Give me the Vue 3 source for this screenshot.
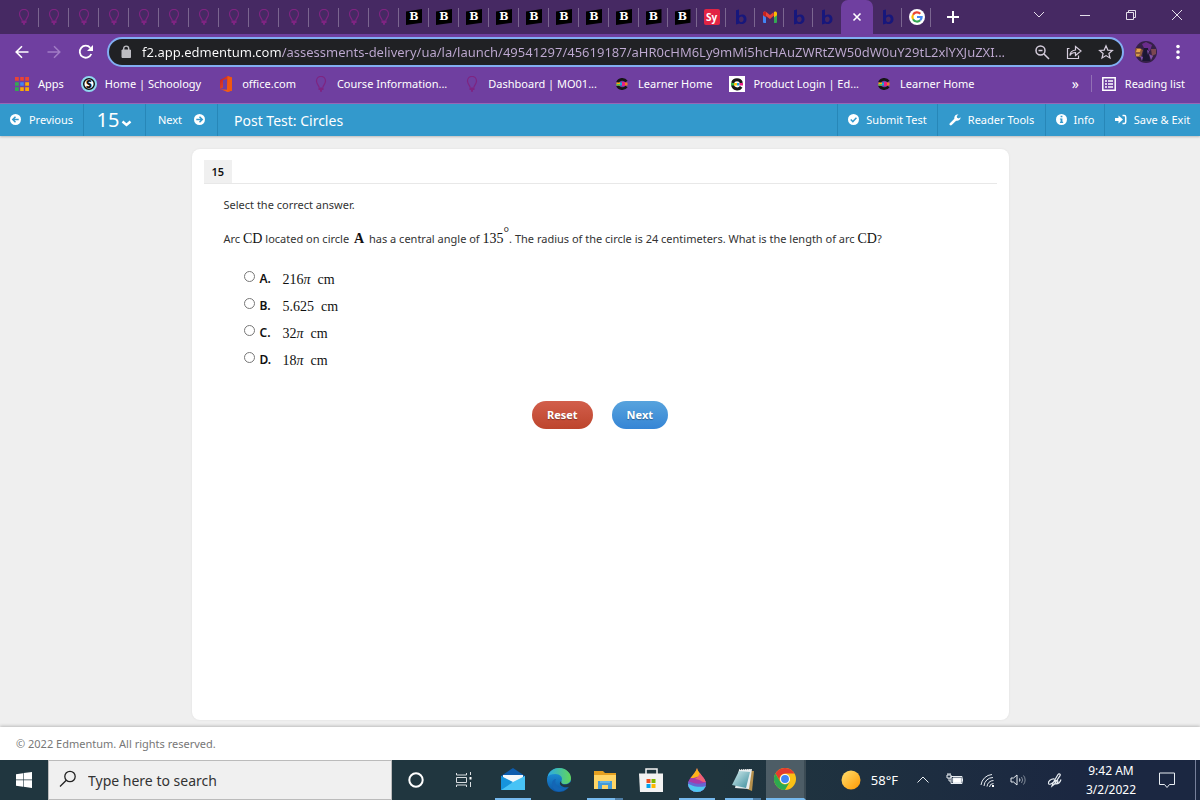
<script setup>
import { ref } from 'vue'

const letters = { brain: 'B', sy: 'Sy', schoology: 'S' }

const tabs = [
  ...Array.from({ length: 13 }, () => ({ icon: 'bulb' })),
  ...Array.from({ length: 8 }, () => ({ icon: 'brain' })),
  { icon: 'brain', narrow: true },
  { icon: 'brain', narrow: true },
  { icon: 'sy', narrow: true },
  { icon: 'bart', narrow: true },
  { icon: 'gmail', narrow: true },
  { icon: 'bart', narrow: true },
  { icon: 'bart', narrow: true, bare: true },
  { icon: 'close', active: true },
  { icon: 'bart', narrow: true },
  { icon: 'google', narrow: true },
]

const bookmarks = [
  { icon: 'apps', text: 'Apps' },
  { icon: 'schoology', text: 'Home | Schoology' },
  { icon: 'office', text: 'office.com' },
  { icon: 'bulb', text: 'Course Information...' },
  { icon: 'bulb', text: 'Dashboard | MO01...' },
  { icon: 'learner', text: 'Learner Home' },
  { icon: 'product', text: 'Product Login | Ed...' },
  { icon: 'learner', text: 'Learner Home' },
]

const url = ref('f2.app.edmentum.com/assessments-delivery/ua/la/launch/49541297/45619187/aHR0cHM6Ly9mMi5hcHAuZWRtZW50dW0uY29tL2xlYXJuZXI...')
const answer = ref(null)
const options = [
  { letter: 'A', value: '216', pi: true },
  { letter: 'B', value: '5.625', pi: false },
  { letter: 'C', value: '32', pi: true },
  { letter: 'D', value: '18', pi: true },
]
const taskApps = [
  { icon: 'mail', open: true },
  { icon: 'edge' },
  { icon: 'folder', open: true, stacked: true },
  { icon: 'store' },
  { icon: 'paint', open: true },
  { icon: 'notepad', open: true, stacked: true },
]
</script>

<template>
  <div class="screen">
    <svg class="sprite" aria-hidden="true">
      <defs>
        <linearGradient id="gOffice" x1="0" y1="0" x2="1" y2="1"><stop offset="0" stop-color="#c2152a" /><stop offset="1" stop-color="#ff7a1a" /></linearGradient>
        <linearGradient id="gEdge" x1="0" y1="0" x2="1" y2="0"><stop offset="0" stop-color="#29a9e8" /><stop offset="1" stop-color="#62d65a" /></linearGradient>
        <linearGradient id="gEdge2" x1="0" y1="0" x2="0" y2="1"><stop offset="0" stop-color="#1f9ce0" /><stop offset="1" stop-color="#0c56a6" /></linearGradient>
        <linearGradient id="gSun" x1="0" y1="0" x2="1" y2="1"><stop offset="0" stop-color="#ffdf70" /><stop offset="1" stop-color="#ff9800" /></linearGradient>
        <linearGradient id="gNote" x1="0" y1="0" x2="1" y2="1"><stop offset="0" stop-color="#d5eef0" /><stop offset="1" stop-color="#3d8d9c" /></linearGradient>
        <clipPath id="cDrop"><path d="M13 1c1 6 9 9 9 16a9 8 0 0 1-18 0C4 11 11 8 13 1z" /></clipPath>
        <clipPath id="cPhoto"><circle cx="11" cy="11" r="11" /></clipPath>
      </defs>
      <symbol id="bulb" viewBox="0 0 16 16"><path d="M6.200 11.500C6 9.500 3.500 8 3.500 4.900a4.500 4.500 0 0 1 9 0C12.500 8 10 9.500 9.800 11.500" fill="none" stroke="#7e2482" stroke-width="1.200" /><path d="M5.500 11.500h5v2.500H9v1.800H7V14H5.500z" fill="#7e2482" /></symbol>
      <symbol id="bart" viewBox="0 0 16 16"><path d="M3 1.200 6 .500v6c4-2.500 7.500-.500 7.500 3.500 0 4.500-4 6-7 4.500L3 15.500zM6 10c0 2.300 1 3.200 2.400 3.200 3 0 3-5.600.200-5.600C7 7.600 6 8.500 6 10z" fill="#17177c" fill-rule="evenodd" /></symbol>
      <symbol id="gmail" viewBox="0 0 16 16"><path d="M1 4h3v10H2a1 1 0 0 1-1-1z" fill="#4285f4" /><path d="M12 4h3v9a1 1 0 0 1-1 1h-2z" fill="#34a853" /><path d="M1 4.500C1 2.500 3 2 4.500 3.200L8 6l3.500-2.800L12 6.500 8 10 4 7z" fill="#ea4335" /><path d="M11.500 3.200C13 2 15 2.500 15 4.500v1.700L12 8.500V3z" fill="#fbbc04" /><path d="M1 4.500C1 3 2.500 2.300 4 3v5.500L1 6.200z" fill="#c5221f" /></symbol>
      <symbol id="close" viewBox="0 0 16 16"><path d="m4.500 4.500 7 7m0-7-7 7" stroke="#fff" stroke-width="1.600" /></symbol>
      <symbol id="google" viewBox="0 0 16 16"><circle cx="8" cy="8" r="8" fill="#fff" /><g fill="none" stroke-width="2.200"><path d="M4.050 5.700A4.600 4.600 0 0 1 11.300 4.800" stroke="#ea4335" /><path d="M4.050 10.300a4.600 4.600 0 0 1 0-4.600" stroke="#fbbc04" /><path d="M11.200 11.300a4.600 4.600 0 0 1-7.150-1" stroke="#34a853" /><path d="M8 8h4.600a4.600 4.600 0 0 1-1.400 3.300" stroke="#4285f4" /></g></symbol>
      <symbol id="apps" viewBox="0 0 16 16"><path d="M1 1h4v4H1zM6 1h4v4H6zM11 1h4v4h-4z" fill="#ea4335" /><path d="M1 6h4v4H1zM1 11h4v4H1z" fill="#34a853" /><path d="M6 6h4v4H6z" fill="#4285f4" /><path d="M6 11h4v4H6zM11 11h4v4h-4zM11 6h4v4h-4z" fill="#fbaa04" /><path d="M5.500 0v16M10.500 0v16M0 5.500h16M0 10.500h16" stroke="#6f3fa0" stroke-width="1.400" /></symbol>
      <symbol id="office" viewBox="0 0 16 16"><path d="M2 4 9.500 0 14 1.500v13L9.500 16 2 13l7 .800V3L5 4v7.500L2 13z" fill="url(#gOffice)" /><path d="M9.500 0 14 1.500v13L9.500 16z" fill="#f0580f" /></symbol>
      <symbol id="learner" viewBox="0 0 16 16"><path d="M12.500 5.500A5 4.500 0 0 0 3.500 6.500M3.500 9.500a5 4.500 0 0 0 9 1" fill="none" stroke="#151515" stroke-width="2.800" /><path d="M2.500 6.500h3.500v3H2.500z" fill="#ffb000" /><path d="M2.500 8h3.500v1.500H2.500z" fill="#3cc46a" /><path d="M6 6.500h2.500v3H6z" fill="#19a6d8" /><path d="M8 6h3v4H8z" fill="#e91e83" /><path d="M11 6.500h2.500v3H11z" fill="#f47b20" /></symbol>
      <symbol id="product" viewBox="0 0 16 16"><path d="M0 0h16v16H0z" fill="#fff" /><path d="M3.500 7a4.800 4.800 0 0 1 9 0M3.500 9a4.800 4.800 0 0 0 8.700 1.800" fill="none" stroke="#151515" stroke-width="3" /><path d="M2 7h3v2.500H2z" fill="#37b34a" /><path d="M5 7h3v2.500H5z" fill="#ffc20e" /><path d="M8 7h2.500v2.500H8z" fill="#19a6d8" /><path d="M10.500 7H14v2.500h-3.500z" fill="#e91e83" /></symbol>
      <symbol id="mail" viewBox="0 0 26 26"><path d="M1 9 13 1l12 8v3H1z" fill="#0d5cad" /><path d="M3 8h20v10H3z" fill="#f3f7fa" /><path d="M1 9l12 8 12-8v14H1z" fill="#28a8ea" /><path d="m1 23 12-8 12-6v14z" fill="#48c3f5" /><path d="m1 9 12 6-12 8z" fill="#1694dc" /></symbol>
      <symbol id="edge" viewBox="0 0 26 26"><circle cx="13" cy="13" r="12" fill="url(#gEdge2)" /><path d="M1.500 10C3 4 8 1 13 1c7 0 12 5 12 10 0 4-3 6-6 6-3.500 0-4.500-1.500-3.500-3 2-4-2-7-6-7-4 0-7 1-8 3z" fill="url(#gEdge)" /><path d="M10 12c-3 6 4 12 12 8-6 7-15 5-16-2-.5-4 2-6 4-6z" fill="#1466b5" /><path d="M15.500 14c-1 1.500 0 3.500 3.500 3.500 2.500 0 4.500-1 6-3V19l-2.500 1c-2 .5-4 .5-6-.500-3-1.500-3.500-4-1-5.500z" fill="#22363f" /></symbol>
      <symbol id="folder" viewBox="0 0 26 26"><path d="M2 4h9l2 2h11v16H2z" fill="#e5a020" /><path d="M2 8h22v14H2z" fill="#ffd566" /><path d="M6 22v-8h14v8h-4v-4h-6v4z" fill="#469bd9" /><path d="M8 14h10v2H8z" fill="#65b4e6" /></symbol>
      <symbol id="store" viewBox="0 0 26 26"><path d="M8 8V2h11v6" fill="none" stroke="#f5f5f5" stroke-width="1.500" /><path d="M1 6.500h24V25H2z" fill="#f3f3f3" /><path d="M8.500 12h4v4h-4z" fill="#f05022" /><path d="M13.500 12h4v4h-4z" fill="#7eb900" /><path d="M8.500 17h4v4h-4z" fill="#00a3ee" /><path d="M13.500 17h4v4h-4z" fill="#ffb800" /></symbol>
      <symbol id="paint" viewBox="0 0 26 26"><g clip-path="url(#cDrop)"><path d="M0 0h26v26H0z" fill="#a83aa8" /><path d="M0 0h26v9C18 5 14 12 6 11z" fill="#ffb319" /><path d="M16 3c4 4 7 8 7 12-5 1-7-3-12-3 3-2 5-4 5-9z" fill="#ef6074" /><path d="M0 14c8-1 10 6 23 1v11H0z" fill="#6666d1" /><path d="M0 16c7 0 9 6 22 3v7H0z" fill="#50c8ef" /></g></symbol>
      <symbol id="notepad" viewBox="0 0 26 26"><path d="m10 3 14 1-2 20-5-2z" fill="#b6914d" /><path d="m9 3 13-1-3 20-14-1z" fill="#e7eced" /><path d="m9 4 11 1-4 16-14-3z" fill="url(#gNote)" /><path d="M9 3h12" stroke="#f3f3f3" stroke-width="1.500" stroke-dasharray="1 1" /></symbol>
    </svg>

    <header class="browser">
      <div class="tabstrip">
        <div class="tabs">
          <button v-for="(t, i) in tabs" :key="i" class="tab" :class="{ narrow: t.narrow, bare: t.bare, active: t.active }" aria-label="Tab">
            <span v-if="letters[t.icon]" class="favicon" :class="t.icon">{{ letters[t.icon] }}</span>
            <svg v-else width="16" height="16"><use :href="'#' + t.icon" /></svg>
          </button>
        </div>
        <button class="newtab" aria-label="New tab"><svg width="12" height="12" viewBox="0 0 12 12"><path d="M6 0v12M0 6h12" stroke="#fff" stroke-width="2" /></svg></button>
        <div class="window-controls">
          <button aria-label="Search tabs"><svg width="12" height="12" viewBox="0 0 12 12"><path d="m1 3 5 5 5-5" /></svg></button>
          <button aria-label="Minimize"><svg width="12" height="12" viewBox="0 0 12 12"><path d="M1 6.500h10" /></svg></button>
          <button aria-label="Restore"><svg width="12" height="12" viewBox="0 0 12 12"><path d="M1.500 3.500h7v7h-7zM3.500 3.500v-2h7v7h-2" /></svg></button>
          <button aria-label="Close"><svg width="12" height="12" viewBox="0 0 12 12"><path d="m1 1 10 10M11 1 1 11" /></svg></button>
        </div>
      </div>

      <div class="toolbar">
        <button class="nav" aria-label="Back"><svg width="14" height="14" viewBox="0 0 14 14"><path d="M13.500 7H1.500M7 1.200 1.200 7 7 12.800" fill="none" stroke="#fff" stroke-width="1.600" /></svg></button>
        <button class="nav" aria-label="Forward"><svg width="14" height="14" viewBox="0 0 14 14"><path d="M.5 7h12M7 1.200 12.800 7 7 12.800" fill="none" stroke="#a17cc5" stroke-width="1.500" /></svg></button>
        <button class="nav" aria-label="Reload"><svg width="16" height="16" viewBox="0 0 16 16"><path d="M13.300 10A6 6 0 1 1 12.300 3.800" fill="none" stroke="#fff" stroke-width="1.800" /><path d="M15 1v6H9z" fill="#fff" /></svg></button>
        <div class="omnibox">
          <svg class="lock" width="12" height="14" viewBox="0 0 12 14"><path d="M2 5h8.500v7.500H2z" fill="#bdbdc2" stroke="#bdbdc2" stroke-linejoin="round" /><path d="M3.700 6V3.600a2.500 2.500 0 0 1 5 0V6" fill="none" stroke="#bdbdc2" stroke-width="1.400" /></svg>
          <input v-model="url" class="url" type="text" aria-label="Address" />
          <button aria-label="Zoom"><svg width="16" height="16" viewBox="0 0 16 16"><circle cx="6.500" cy="6.500" r="4.500" /><path d="m10 10 5 5M4.500 6.500h4" /></svg></button>
          <button aria-label="Share"><svg width="16" height="16" viewBox="0 0 16 16"><path class="thin" d="M3.500 4.500h-2v10h11v-3M9.500 6V2.500L15 7l-5.500 4.500V8.500c-3 0-4.500 1-5.500 3 0-3 2-5 5.500-5.500z" /></svg></button>
          <button aria-label="Bookmark"><svg width="16" height="16" viewBox="0 0 16 16"><path class="thin" d="m8 1.800 1.800 4.300 4.600.4-3.500 3 1.100 4.500-4-2.400L4 14l1.100-4.500-3.500-3 4.600-.4z" /></svg></button>
        </div>
        <button class="profile" aria-label="Profile"><svg width="22" height="22" viewBox="0 0 22 22"><g clip-path="url(#cPhoto)"><path d="M0 0h22v22H0z" fill="#352047" /><path d="M0 7h5l3 2-2 7H0z" fill="#8e5a3c" /><path d="M2 8h4l-1 3H1z" fill="#e7a44c" /><path d="M1 13h4l-1 2H1z" fill="#d29a4c" /><path d="m7 3 4-2 6 3-2 6-5-1z" fill="#6a2c8c" /><path d="M16 8h5v5l-4 2z" fill="#7b4652" /><path d="M9 7h4l2 13H7z" fill="#1b1733" /><path d="m5 15 3 1-1 4zM14 13l4 2-2 4zM12 9l2 1-1 4z" fill="#8152a9" /></g></svg></button>
        <button class="menu" aria-label="Menu"><svg width="4" height="16" viewBox="0 0 4 16"><g fill="#fff"><circle cx="2" cy="2.500" r="1.800" /><circle cx="2" cy="8" r="1.800" /><circle cx="2" cy="13.500" r="1.800" /></g></svg></button>
      </div>

      <nav class="bookmarks">
        <a v-for="(b, i) in bookmarks" :key="i" href="#" class="bookmark">
          <span v-if="letters[b.icon]" class="favicon" :class="b.icon">{{ letters[b.icon] }}</span>
          <svg v-else width="16" height="16"><use :href="'#' + b.icon" /></svg>
          <span>{{ b.text }}</span>
        </a>
        <button class="more" aria-label="More bookmarks">»</button>
        <button class="reading"><svg width="14" height="14" viewBox="0 0 14 14"><path d="M.8.800h12.400v12.400H.8z" fill="none" stroke="#fff" stroke-width="1.500" /><path d="M3 4h2M6 4h5M3 7h2M6 7h5M3 10h2M6 10h5" stroke="#fff" stroke-width="1.500" /></svg>Reading list</button>
      </nav>
    </header>

    <div class="appbar">
      <button class="cell previous"><svg width="11" height="11" viewBox="0 0 12 12"><circle cx="6" cy="6" r="6" fill="#fff" /><path d="M9.500 6H3.500M6 3 3 6l3 3" fill="none" stroke="#3399cc" stroke-width="1.600" /></svg>Previous</button>
      <button class="cell number">15<svg width="11" height="7" viewBox="0 0 11 7"><path d="m1.500 1.500 4 3.500 4-3.500" fill="none" stroke="#fff" stroke-width="2.400" /></svg></button>
      <button class="cell next">Next<svg width="11" height="11" viewBox="0 0 12 12"><circle cx="6" cy="6" r="6" fill="#fff" /><path d="M2.500 6h6M6 3l3 3-3 3" fill="none" stroke="#3399cc" stroke-width="1.600" /></svg></button>
      <h1 class="title">Post Test: Circles</h1>
      <button class="cell tool submit"><svg width="11" height="11" viewBox="0 0 12 12"><circle cx="6" cy="6" r="6" fill="#fff" /><path d="m3 6 2.300 2.300L9.200 4.200" fill="none" stroke="#3399cc" stroke-width="1.600" /></svg>Submit Test</button>
      <button class="cell tool reader"><svg width="12" height="12" viewBox="0 0 12 12"><path d="M1.800 10.200 7 5" stroke="#fff" stroke-width="2.600" stroke-linecap="round" /><path d="M11.600 3.200 9.800 4.500 8 3.800 7.800 2 9.500.500A3.400 3.400 0 0 0 5.500 5L7 6.500a3.400 3.400 0 0 0 4.600-3.300z" fill="#fff" /></svg>Reader Tools</button>
      <button class="cell tool info"><svg width="11" height="11" viewBox="0 0 12 12"><circle cx="6" cy="6" r="6" fill="#fff" /><path d="M5 2h2v1.600H5zM4.300 4.800H7v3.600h.8v1.400H4.300V8.400H5V6h-.7z" fill="#3399cc" /></svg>Info</button>
      <button class="cell tool exit"><svg width="12" height="11" viewBox="0 0 12 11"><path d="M0 4h3.500V1.500l4.500 4-4.500 4V7H0z" fill="#fff" /><path d="M7.500 1.500h1.700c1 0 1.500.5 1.500 1.500v5c0 1-.5 1.500-1.500 1.500H7.500" fill="none" stroke="#fff" stroke-width="1.500" /></svg>Save &amp; Exit</button>
    </div>

    <main class="content">
      <form class="card" @submit.prevent>
        <div class="card-head"><span class="badge">15</span></div>
        <div class="question">
          <p>Select the correct answer.</p>
          <p>Arc <span class="math">CD</span> located on circle <b class="math point">A</b> has a central angle of <span class="math">135<sup>°</sup></span>. The radius of the circle is 24 centimeters. What is the length of arc <span class="math">CD</span>?</p>
        </div>
        <div class="options">
          <label v-for="o in options" :key="o.letter" class="option">
            <input v-model="answer" type="radio" name="answer" :value="o.letter" />
            <b>{{ o.letter }}.</b>
            <span class="value">{{ o.value }}<i v-if="o.pi">π</i>&nbsp; cm</span>
          </label>
        </div>
        <div class="actions">
          <button type="reset" class="pill red" @click="answer = null">Reset</button>
          <button type="submit" class="pill blue">Next</button>
        </div>
      </form>
    </main>

    <footer class="footer">© 2022 Edmentum. All rights reserved.</footer>

    <div class="taskbar">
      <button class="start" aria-label="Start"><svg width="16" height="16" viewBox="0 0 16 16"><path d="M0 2.200 7 1.200v6.300H0zM7.600 1.100 16 0v7.500H7.600zM0 8.200h7v6.500l-7-1zM7.600 8.200H16V16l-8.400-1.200z" fill="#fff" /></svg></button>
      <label class="search"><svg width="18" height="18" viewBox="0 0 18 18"><circle cx="11" cy="6.500" r="5.200" fill="none" stroke="#222" stroke-width="1.300" /><path d="M7.300 10.300 1 16.500" stroke="#222" stroke-width="1.300" /></svg><input type="text" placeholder="Type here to search" aria-label="Search" /></label>
      <button class="sys" aria-label="Cortana"><svg width="16" height="16" viewBox="0 0 16 16"><circle cx="8" cy="8" r="6.700" fill="none" stroke="#fff" stroke-width="2" /></svg></button>
      <button class="sys" aria-label="Task view"><svg width="18" height="16" viewBox="0 0 18 16"><path d="M1.500 1v2h10V1M1.500 5.500h10v5h-10zM1.500 15v-2h10v2M15.500 0v3M15.500 10v5" fill="none" stroke="#d8dde0" /><path d="M14.500 5h2v2.500h-2z" fill="#fff" /></svg></button>
      <div class="task-apps">
        <button v-for="a in taskApps" :key="a.icon" class="task" :class="{ open: a.open, stacked: a.stacked }" :aria-label="a.icon"><svg width="26" height="26"><use :href="'#' + a.icon" /></svg></button>
      </div>
      <button class="chrome" aria-label="Chrome"><svg width="22" height="22" viewBox="0 0 24 24"><circle cx="12" cy="12" r="12" fill="#fbc116" /><path d="M1.600 6A12 12 0 0 1 22.400 6H12a6 6 0 0 0-5.200 9z" fill="#e33b2e" /><path d="M1.600 6a12 12 0 0 0 10.400 18l5.200-9a6 6 0 0 1-10.400 0z" fill="#2da94f" /><circle cx="12" cy="12" r="5.500" fill="#fff" /><circle cx="12" cy="12" r="4.300" fill="#4285f4" /></svg></button>
      <div class="tray">
        <button class="weather"><svg width="20" height="20" viewBox="0 0 20 20"><circle cx="10" cy="10" r="9.500" fill="url(#gSun)" /></svg>58°F</button>
        <button class="tray-icon caret" aria-label="Hidden icons"><svg width="14" height="16" viewBox="0 0 14 16"><path d="m1.500 10.500 5.500-5.500 5.500 5.500" /></svg></button>
        <button class="tray-icon battery" aria-label="Battery"><svg width="18" height="16" viewBox="0 0 18 16"><path d="M5 4.500h11v7H5zM16.500 6.500v3" /><path d="M7 6h8v4.500H7z" fill="#fff" /><path d="M1 3h4v3H1zM2 1v2M4 1v2M3 6v3h2" /></svg></button>
        <button class="tray-icon wifi" aria-label="Network"><svg width="16" height="16" viewBox="0 0 16 16"><path d="M1 13A12 12 0 0 1 12 2.500M4 14A9 9 0 0 1 13 5.500M7 14.500A6.500 6.500 0 0 1 13.500 8.500M9.500 15a4 4 0 0 1 4-3.500" /><path d="M12 13h2v2h-2z" fill="#fff" stroke="none" /></svg></button>
        <button class="tray-icon sound" aria-label="Volume"><svg width="16" height="16" viewBox="0 0 16 16"><path d="M1 6h2.500L7 3v10L3.500 10H1zM9.500 6.500a3 3 0 0 1 0 3" /><path d="M11.500 5a5 5 0 0 1 0 6M13.500 3.500a7 7 0 0 1 0 9" opacity=".5" /></svg></button>
        <button class="tray-icon pen" aria-label="Pen"><svg width="16" height="16" viewBox="0 0 16 16"><path d="m6 11 5-8.500c1-1.500 3-.2 2 1.200L7.500 12 5 14zM7.500 7C4 6.500 1 9.500 1.500 11.500 2.500 14 7 9.500 9 8.500c2.500-.5 2.500 2 0 3.500 2.500 0 4-1.500 5-4.500" stroke-width="1.200" /></svg></button>
        <div class="clock"><span>9:42 AM</span><span>3/2/2022</span></div>
        <button class="notice" aria-label="Notifications"><svg width="18" height="18" viewBox="0 0 18 18"><path d="M1.500 2h15v11.500h-5L9 16.500l-2.500-3h-5z" /></svg></button>
      </div>
    </div>
  </div>
</template>

<style>
body { margin: 0; }
</style>

<style scoped>
* { box-sizing: border-box; }
.screen { min-height: 100vh; display: flex; flex-direction: column; background: #efefef; font-family: "Noto Sans", "Open Sans", sans-serif; font-size: 11px; }
.sprite { position: absolute; width: 0; height: 0; }
button { border: 0; padding: 0; margin: 0; background: none; font: inherit; color: inherit; display: flex; align-items: center; justify-content: center; flex-shrink: 0; }
svg { display: block; flex-shrink: 0; }
.favicon { width: 16px; height: 16px; text-align: center; flex-shrink: 0; color: #fff; }
.favicon.brain { background: #000; clip-path: polygon(0 16%, 100% 0, 100% 86%, 0 100%); font: 700 11px/16px "DejaVu Serif", serif; }
.favicon.sy { background: #e22444; border-radius: 2px; font: 700 10px/16px "Open Sans", sans-serif; }
.favicon.schoology { border: 2px solid #8fd8ee; border-radius: 50%; font: 800 10px/12px "Open Sans", sans-serif; color: #111; background: radial-gradient(#fff 0 4px, #111 5px); }
.browser { background: #6f3fa0; color: #fff; border-bottom: 1px solid #9660b6; }
.tabstrip { display: flex; height: 34px; background: #462963; padding-left: 9px; }
.tabs { display: flex; }
.tab { position: relative; width: 30px; }
.tab.narrow { width: 29px; }
.tab.bare { width: 28px; }
.tab::after { content: ""; position: absolute; right: 0; top: 8px; height: 19px; width: 1px; background: #7b6690; }
.tab.active { width: 32px; background: #6f3fa0; border-radius: 7px 7px 0 0; }
.tab.active::after, .tab.bare::after { display: none; }
.newtab { width: 44px; }
.window-controls { margin-left: auto; display: flex; align-items: center; height: 29px; }
.window-controls button { width: 46px; height: 28px; }
.window-controls svg { fill: none; stroke: #e4deea; stroke-width: 1; }
.toolbar { display: flex; align-items: center; height: 36px; padding: 0 8px 0 6px; }
.nav { width: 32px; height: 30px; }
.omnibox { flex: 1; min-width: 0; height: 30px; margin-left: 5px; display: flex; align-items: center; background: #202124; border: 2px solid #82aef2; border-radius: 15px; padding: 0 0 0 11px; }
.url { flex: 1; min-width: 0; margin-left: 10px; padding: 0; border: 0; outline: 0; font: 13px/22px "Noto Sans", "Open Sans", sans-serif; color: #fff; background: linear-gradient(90deg, #fff 140px, #bfaad2 140px); -webkit-background-clip: text; background-clip: text; -webkit-text-fill-color: transparent; }
.omnibox button { width: 32px; height: 24px; }
.omnibox button svg { fill: none; stroke: #d6cedd; stroke-width: 1.5; }
.omnibox .thin { stroke-width: 1.2; }
.profile { width: 22px; margin-left: 11px; }
.menu { width: 28px; margin-left: 7px; }
.bookmarks { display: flex; align-items: center; height: 33px; padding: 0 15px 6px 14px; gap: 17px; }
.bookmark { display: flex; align-items: center; gap: 8px; color: #fff; text-decoration: none; white-space: nowrap; }
.more { margin-left: auto; font-size: 14px; }
.reading { gap: 9px; white-space: nowrap; border-left: 1px solid #9270b5; height: 17px; padding-left: 10px; margin-left: -5px; }
.appbar { display: flex; height: 32px; background: #3399cc; color: #fff; box-shadow: 0 1px 2px #bbb; }
.cell { border-right: 1px solid #2787b8; white-space: nowrap; padding-bottom: 1px; }
.previous { width: 84px; gap: 8px; }
.number { width: 62px; font-size: 20px; gap: 2px; }
.number svg { margin-top: 7px; }
.next { width: 72px; gap: 12px; }
.title { flex: 1; margin: 0; padding-left: 16px; font-size: 14px; line-height: 34px; font-weight: 400; white-space: nowrap; }
.tool { border-right: 0; border-left: 1px solid #2787b8; gap: 7px; }
.submit { width: 100px; }
.reader { width: 108px; }
.info { width: 59px; }
.exit { width: 96px; }
.content { flex: 1; display: flex; justify-content: center; padding: 13px 16px 7px; }
.card { width: 100%; max-width: 817px; background: #fff; border-radius: 8px; padding: 11px 12px; box-shadow: 0 0 2px #ddd; color: #333; }
.card-head { display: flex; border-bottom: 1px solid #e8e8e8; }
.badge { background: #f0f0f0; color: #111; font-weight: 600; padding: 0 8px; line-height: 23px; }
.question { padding: 10px 20px 0; }
.question p { margin: 0 0 12px; line-height: 22px; }
.math { font: 14px/18px "Liberation Serif", serif; color: #111; }
.point { font-weight: 700; margin: 0 2px; }
.math sup { font-size: 14px; line-height: 0; }
.options { padding: 5px 40px 0; display: grid; gap: 5px; }
.option { display: flex; align-items: center; height: 22px; color: #111; }
.option input { width: 11px; height: 11px; margin: 0 5px 3px 0; appearance: none; border: 1px solid #777; border-radius: 50%; background: #fff; }
.option input:checked { background: #3574c9; box-shadow: inset 0 0 0 2px #fff; }
.option b { width: 23px; font-size: 12px; font-weight: 600; }
.value { font: 14px/18px "Liberation Serif", serif; padding-top: 3px; }
.actions { display: flex; justify-content: center; gap: 19px; margin-top: 31px; }
.pill { height: 28px; padding: 0 15px 1px; border-radius: 14px; color: #fff; font-weight: 700; text-shadow: 0 1px 1px #0005; }
.red { background: linear-gradient(#d25e4b, #bd452d); }
.blue { background: linear-gradient(#57a3dd, #3685d5); }
.footer { background: #fff; color: #777; line-height: 33px; padding: 0 16px; box-shadow: 0 -1px 3px #bbb; }
.taskbar { display: flex; height: 40px; background: linear-gradient(90deg, #20363f 0 60%, #1b2741 90%); color: #fff; }
.start { width: 48px; }
.search { flex: 0 1 344px; min-width: 120px; display: flex; align-items: center; background: #f0f0f0; border: 1px solid #bbb; padding: 0 10px; gap: 11px; }
.search svg { margin-bottom: 2px; }
.search input { flex: 1; min-width: 0; border: 0; outline: 0; padding: 2px 0 0; background: none; font: 14px/24px "Noto Sans", "Open Sans", sans-serif; color: #333; }
.search input::placeholder { color: #333; opacity: 1; }
.sys { width: 48px; }
.task-apps { display: flex; padding-left: 2px; }
.task { position: relative; width: 46px; }
.task.open::after { content: ""; position: absolute; left: 5px; right: 5px; bottom: 0; height: 2px; background: #76b9ed; }
.task.stacked::after { background: linear-gradient(90deg, #76b9ed 28px, #4d7da5 28px); }
.chrome { width: 40px; background: #4d5d66; border-bottom: 2px solid #76b9ed; border-right: 2px solid #3b4b54; }
.tray { margin-left: auto; display: flex; border-right: 1px solid #77809a; margin-right: 4px; font-size: 12px; }
.weather { gap: 10px; margin-right: 14px; font-size: 13px; }
.tray-icon { width: 32px; }
.tray-icon svg, .notice svg { fill: none; stroke: #e8edf2; stroke-width: 1; }
.caret { width: 22px; }
.battery { width: 42px; }
.wifi { width: 24px; }
.sound { width: 36px; }
.pen { width: 38px; }
.clock { width: 74px; display: flex; flex-direction: column; align-items: center; justify-content: center; line-height: 19px; }
.notice { width: 38px; margin-right: 9px; }
</style>
